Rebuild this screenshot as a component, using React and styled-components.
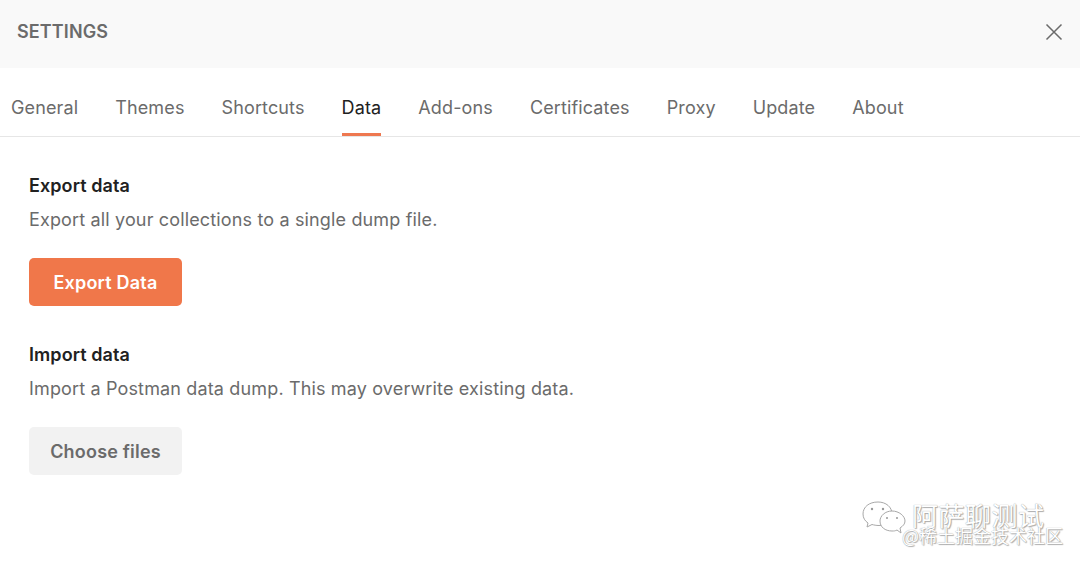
import React from 'react';
import styled, { createGlobalStyle } from 'styled-components';

const GlobalStyle = createGlobalStyle`
  html, body {
    margin: 0;
    padding: 0;
    background: #fff;
    font-family: 'Inter', 'Noto Sans', sans-serif;
  }
  * { box-sizing: border-box; }
`;

const Page = styled.div`
  position: relative;
  width: 1080px;
  height: 564px;
  overflow: hidden;
  background: #fff;
`;

const Header = styled.header`
  height: 68px;
  background: #f9f9f9;
  display: flex;
  align-items: center;
  justify-content: space-between;
  padding: 0 17px;
`;

const HeaderTitle = styled.h1`
  margin: 0 0 6px;
  font-size: 18px;
  font-weight: 600;
  letter-spacing: 0.12px;
  color: #6b6b6b;
`;

const CloseButton = styled.button`
  border: 0;
  background: none;
  padding: 0;
  width: 18px;
  height: 18px;
  display: flex;
  color: #6b6b6b;
  margin-bottom: 5px;
`;

const Tabs = styled.nav`
  height: 69px;
  display: flex;
  gap: 37px;
  padding: 0 11px;
  border-bottom: 1px solid #e6e6e6;
`;

const Tab = styled.a`
  height: 68px;
  padding-top: 28px;
  font-size: 18px;
  line-height: 24px;
  letter-spacing: 0.13px;
  color: ${(p) => (p.$active ? '#212121' : '#6b6b6b')};
  border-bottom: 3px solid ${(p) => (p.$active ? '#ee7850' : 'transparent')};
`;

const Content = styled.main`
  padding: 37px 29px 0;
`;

const Section = styled.section`
  margin-bottom: 37px;
`;

const SectionTitle = styled.h2`
  margin: 0;
  font-size: 18px;
  line-height: 24px;
  font-weight: 600;
  letter-spacing: 0.08px;
  color: #212121;
`;

const SectionText = styled.p`
  margin: 10px 0 26px;
  font-size: 18px;
  line-height: 24px;
  letter-spacing: 0.15px;
  color: #6b6b6b;
`;

const Button = styled.button`
  display: block;
  width: 153px;
  height: 48px;
  padding: 0;
  border: 0;
  border-radius: 5px;
  font-family: inherit;
  font-size: 18px;
  font-weight: 600;
  letter-spacing: 0.2px;
  background: ${(p) => (p.$primary ? '#f0774a' : '#f2f2f2')};
  color: ${(p) => (p.$primary ? '#fff' : '#6b6b6b')};
`;

const Watermark = styled.div`
  position: absolute;
  left: 862px;
  top: 500px;
  color: #fff;
  font-family: 'Noto Sans CJK SC', sans-serif;
  text-shadow: 0 0 1px #8a8a8a, 1px 1px 1px #b0b0b0;
`;

const WatermarkName = styled.div`
  display: flex;
  align-items: flex-start;
  gap: 4px;
  height: 26px;
  font-size: 26px;
  line-height: 30px;
  letter-spacing: 0.5px;
  white-space: nowrap;
`;

const WatermarkSource = styled.div`
  margin: -1px 0 0 40px;
  font-size: 18px;
  line-height: 20px;
  white-space: nowrap;
`;

const TABS = ['General', 'Themes', 'Shortcuts', 'Data', 'Add-ons', 'Certificates', 'Proxy', 'Update', 'About'];

const App = () => {
  return (
    <Page>
      <GlobalStyle />
      <Header>
        <HeaderTitle>SETTINGS</HeaderTitle>
        <CloseButton aria-label="Close">
          <svg width="18" height="18" viewBox="0 0 18 18" fill="none" stroke="currentColor" strokeWidth="1.5">
            <path d="M1.5 1.5 L16.5 16.5 M16.5 1.5 L1.5 16.5" />
          </svg>
        </CloseButton>
      </Header>
      <Tabs>
        {TABS.map((t) => (
          <Tab key={t} $active={t === 'Data'}>{t}</Tab>
        ))}
      </Tabs>
      <Content>
        <Section>
          <SectionTitle>Export data</SectionTitle>
          <SectionText>Export all your collections to a single dump file.</SectionText>
          <Button $primary>Export Data</Button>
        </Section>
        <Section>
          <SectionTitle>Import data</SectionTitle>
          <SectionText>Import a Postman data dump. This may overwrite existing data.</SectionText>
          <Button>Choose files</Button>
        </Section>
      </Content>
      <Watermark>
        <WatermarkName>
          <svg width="46" height="34" viewBox="0 0 46 34" fill="#fff" stroke="#a8a8a8" strokeWidth="1">
            <path d="M16 2 C7 2 1 7 1 14 C1 18 3 21 6 23 L5 27 L10 24.5 C12 25 14 25.5 17 25.5 C24 25.5 30 20 30 14 C30 7 24 2 16 2 Z" />
            <path d="M30 11 C23 11 18 16 18 21 C18 27 23 31 30 31 C32 31 33 31 35 30 L39 33 L38 28 C41 26 43 24 43 21 C43 16 37 11 30 11 Z" />
            <circle cx="10" cy="9" r="1.2" fill="#999" stroke="none" />
            <circle cx="21" cy="9" r="1.2" fill="#999" stroke="none" />
            <circle cx="25" cy="18" r="1" fill="#999" stroke="none" />
            <circle cx="35" cy="18" r="1" fill="#999" stroke="none" />
          </svg>
          阿萨聊测试
        </WatermarkName>
        <WatermarkSource>@稀土掘金技术社区</WatermarkSource>
      </Watermark>
    </Page>
  );
};

export default App;
